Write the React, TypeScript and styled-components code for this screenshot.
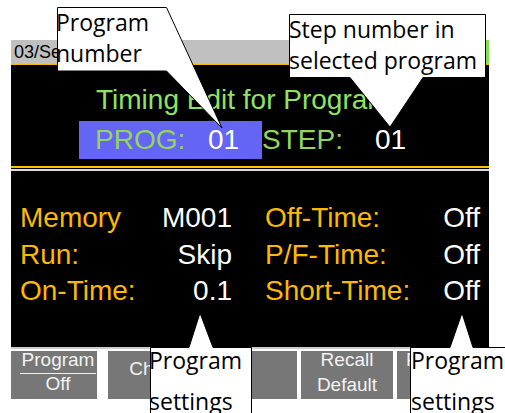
import styled, { createGlobalStyle } from "styled-components";

const GlobalStyle = createGlobalStyle`
  html, body {
    margin: 0;
    padding: 0;
    background: #fff;
    overflow: hidden;
  }
`;

const Page = styled.div`
  position: relative;
  width: 505px;
  height: 413px;
  overflow: hidden;
  box-sizing: border-box;
  padding: 40px 0 0 11px;
  font-family: "Liberation Sans", Arial, sans-serif;
`;

const Screen = styled.div`
  width: 478px;
`;

const StatusBar = styled.div`
  display: flex;
  height: 24px;
  background: #c0c0c0;
  border-bottom: 1px solid #f2b600;
`;

const DateText = styled.span`
  flex: 1;
  padding-left: 3px;
  font-size: 18px;
  line-height: 24px;
  color: #000;
`;

const Led = styled.span`
  width: 3px;
  height: 23px;
  background: #80e050;
`;

const Header = styled.header`
  box-sizing: border-box;
  height: 103px;
  padding: 19px 0 0 68px;
  background: #000;
  border-bottom: 2px solid #ffc000;
`;

const Title = styled.div`
  margin-left: 17px;
  font-size: 28px;
  line-height: 32px;
  color: #8ee35f;
  white-space: nowrap;
`;

const SelectRow = styled.div`
  display: flex;
  align-items: center;
  margin-top: 5px;
  height: 38px;
  font-size: 28px;
  line-height: 38px;
  white-space: nowrap;
`;

const ProgBox = styled.div`
  display: flex;
  box-sizing: border-box;
  width: 183px;
  height: 38px;
  padding-left: 16px;
  background: #6464f5;
`;

const Key = styled.span`
  width: 113px;
  color: #95d45c;
`;

const KeyValue = styled.span`
  color: #fff;
`;

const Divider = styled.div`
  height: 2px;
  border-top: 1px solid #000;
  background: #dcdcdc;
`;

const Params = styled.div`
  box-sizing: border-box;
  height: 176px;
  padding: 29px 9px 0 9px;
  background: #000;
  display: grid;
  grid-template-columns: 212px 215px;
  grid-auto-rows: 36.7px;
  column-gap: 33px;
  align-content: start;
`;

const Field = styled.div`
  display: flex;
  justify-content: space-between;
  font-size: 28px;
  line-height: 36.7px;
  white-space: nowrap;
`;

const FieldName = styled.span`
  color: #fdb900;
`;

const FieldValue = styled.span`
  color: #fff;
`;

const SoftKeys = styled.div`
  display: flex;
  gap: 4px;
  padding-top: 2px;
  border-top: 2px solid #cdcdcd;
`;

const SoftKey = styled.div<{ $w: number; $single?: boolean }>`
  box-sizing: border-box;
  display: flex;
  flex-direction: column;
  align-items: center;
  width: ${({ $w }) => $w}px;
  height: 48px;
  padding-top: ${({ $single }) => ($single ? 10 : 1)}px;
  background: #777;
  color: #f2f2f2;
  font-size: 19px;
`;

const ToggleKey = styled(SoftKey)`
  padding-left: 8px;
  margin-right: 7px;
`;

const KeyLine = styled.span`
  line-height: 16px;
  white-space: nowrap;

  & + & {
    margin-top: 9px;
  }
`;

const KeyRule = styled.span`
  width: 76px;
  height: 1px;
  margin: 5px 0 2px;
  background: #f2f2f2;
`;

const CalloutWrap = styled.div<{ $x: number; $y: number; $w: number; $h: number }>`
  position: absolute;
  left: ${({ $x }) => $x}px;
  top: ${({ $y }) => $y}px;
  width: ${({ $w }) => $w}px;
  height: ${({ $h }) => $h}px;

  svg {
    position: absolute;
    left: 0;
    top: 0;
    overflow: visible;
  }
`;

const CalloutText = styled.div<{ $x: number; $y: number; $lh: number }>`
  position: absolute;
  left: ${({ $x }) => $x}px;
  top: ${({ $y }) => $y}px;
  font-family: "Open Sans", "Noto Sans", sans-serif;
  font-size: 23px;
  line-height: ${({ $lh }) => $lh}px;
  color: #000;
  white-space: nowrap;
`;

type CalloutData = {
  x: number;
  y: number;
  w: number;
  h: number;
  points: string;
  tx: number;
  ty: number;
  lh: number;
  lines: string[];
};

const callouts: CalloutData[] = [
  { x: 57, y: 7, w: 167, h: 122, points: "0.5,0.5 109.5,0.5 165,121 109.5,64 0.5,64", tx: -1, ty: 0, lh: 31, lines: ["Program", "number"] },
  { x: 289, y: 14, w: 198, h: 114, points: "0.5,0.5 196.5,0.5 196.5,63.5 134,63.5 101,113 61,63.5 0.5,63.5", tx: 0, ty: 0, lh: 31, lines: ["Step number in", "selected program"] },
  { x: 150, y: 313, w: 102, h: 110, points: "0.5,110 0.5,34.5 39,34.5 50,0 63,34.5 101.5,34.5 101.5,110", tx: -1, ty: 27, lh: 41, lines: ["Program", "settings"] },
  { x: 410, y: 313, w: 120, h: 110, points: "0.5,110 0.5,34.5 40,34.5 52,0 63,34.5 119.5,34.5 119.5,110", tx: 1, ty: 27, lh: 41, lines: ["Program", "settings"] },
];

const Callout = ({ c }: { c: CalloutData }) => (
  <CalloutWrap $x={c.x} $y={c.y} $w={c.w} $h={c.h}>
    <svg width={c.w} height={c.h}>
      <polygon points={c.points} fill="#fff" stroke="#000" strokeWidth={1} />
    </svg>
    <CalloutText $x={c.tx} $y={c.ty} $lh={c.lh}>
      {c.lines.map((l) => (
        <div key={l}>{l}</div>
      ))}
    </CalloutText>
  </CalloutWrap>
);

const params = [
  ["Memory", "M001"],
  ["Off-Time:", "Off"],
  ["Run:", "Skip"],
  ["P/F-Time:", "Off"],
  ["On-Time:", "0.1"],
  ["Short-Time:", "Off"],
];

export default function App() {
  return (
    <>
      <GlobalStyle />
      <Page>
        <Screen>
          <StatusBar>
            <DateText>03/Sep/2013</DateText>
            <Led />
          </StatusBar>
          <Header>
            <Title>Timing Edit for Program</Title>
            <SelectRow>
              <ProgBox>
                <Key>PROG:</Key>
                <KeyValue>01</KeyValue>
              </ProgBox>
              <Key>STEP:</Key>
              <KeyValue>01</KeyValue>
            </SelectRow>
          </Header>
          <Divider />
          <Params>
            {params.map(([name, value]) => (
              <Field key={name}>
                <FieldName>{name}</FieldName>
                <FieldValue>{value}</FieldValue>
              </Field>
            ))}
          </Params>
          <SoftKeys>
            <ToggleKey $w={86}>
              <KeyLine>Program</KeyLine>
              <KeyRule />
              <KeyLine>Off</KeyLine>
            </ToggleKey>
            <SoftKey $w={92} $single>
              <KeyLine>Chain</KeyLine>
            </SoftKey>
            <SoftKey $w={93} />
            <SoftKey $w={92}>
              <KeyLine>Recall</KeyLine>
              <KeyLine>Default</KeyLine>
            </SoftKey>
            <SoftKey $w={92}>
              <KeyLine>Previous</KeyLine>
              <KeyLine>Step</KeyLine>
            </SoftKey>
          </SoftKeys>
        </Screen>
        {callouts.map((c, i) => (
          <Callout key={i} c={c} />
        ))}
      </Page>
    </>
  );
}
